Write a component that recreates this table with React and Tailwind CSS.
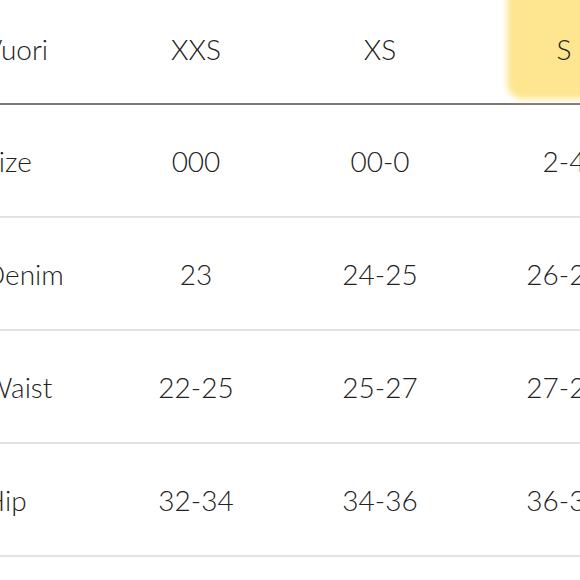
const cols = ['XXS', 'XS', 'S'];

const rows = [
  { label: 'Size', values: ['000', '00-0', '2-4'] },
  { label: 'Denim', values: ['23', '24-25', '26-27'] },
  { label: 'Waist', values: ['22-25', '25-27', '27-29'] },
  { label: 'Hip', values: ['32-34', '34-36', '36-38'] },
];

export default function App() {
  return (
    <div
      className="w-[580px] h-[580px] overflow-hidden bg-white text-[#222] font-light"
      style={{ fontFamily: 'Lato, "Helvetica Neue", Arial, sans-serif' }}
    >
      <div className="ml-[-16px] w-[672px]">
        {/* header */}
        <div className="grid grid-cols-[120px_184px_184px_184px] h-[105px] border-b-2 border-[#7a7a7a]">
          <div className="flex items-center pb-[6px] text-[28px]">Vuori</div>
          {cols.map((c, i) => (
            <div key={c} className="relative flex items-center justify-center pb-[6px] text-[28px]">
              {i === 2 && (
                <div className="absolute left-[35px] right-[33px] top-[-30px] bottom-[4px] rounded-2xl bg-[#fde68f] blur-[3px]" />
              )}
              <span className="relative">{c}</span>
            </div>
          ))}
        </div>

        {/* body */}
        {rows.map((r) => (
          <div
            key={r.label}
            className="grid grid-cols-[120px_184px_184px_184px] h-[113px] border-b-2 border-[#e2e2e2]"
          >
            <div className="flex items-center text-[28px]">{r.label}</div>
            {r.values.map((v, i) => (
              <div key={i} className="flex items-center justify-center text-[28px]">
                {v}
              </div>
            ))}
          </div>
        ))}
      </div>
    </div>
  );
}
